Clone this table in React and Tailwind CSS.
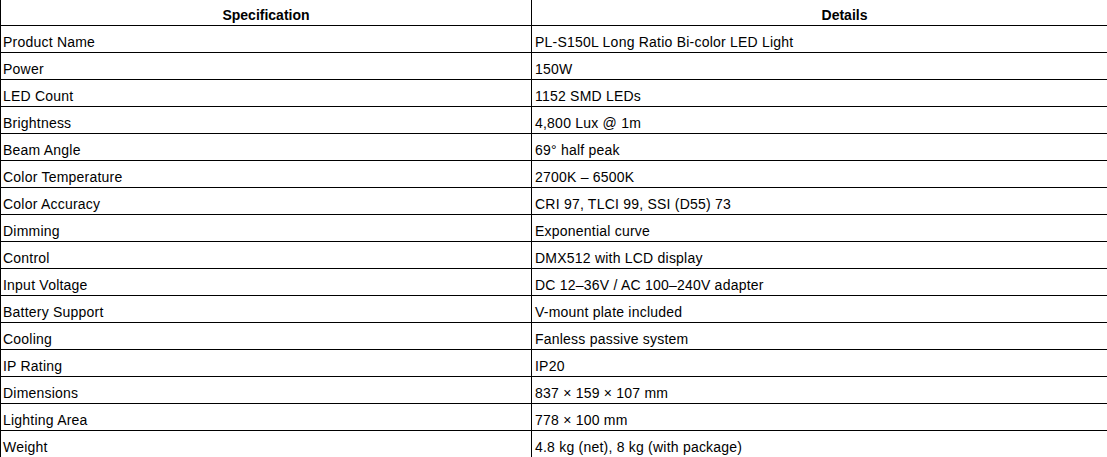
const specs = [
  ["Product Name", "PL-S150L Long Ratio Bi-color LED Light"],
  ["Power", "150W"],
  ["LED Count", "1152 SMD LEDs"],
  ["Brightness", "4,800 Lux @ 1m"],
  ["Beam Angle", "69° half peak"],
  ["Color Temperature", "2700K – 6500K"],
  ["Color Accuracy", "CRI 97, TLCI 99, SSI (D55) 73"],
  ["Dimming", "Exponential curve"],
  ["Control", "DMX512 with LCD display"],
  ["Input Voltage", "DC 12–36V / AC 100–240V adapter"],
  ["Battery Support", "V-mount plate included"],
  ["Cooling", "Fanless passive system"],
  ["IP Rating", "IP20"],
  ["Dimensions", "837 × 159 × 107 mm"],
  ["Lighting Area", "778 × 100 mm"],
  ["Weight", "4.8 kg (net), 8 kg (with package)"],
];

export default function App() {
  return (
    <div className="w-screen h-screen overflow-hidden bg-white">
      <table
        className="mt-[-2px] w-[1158px] border-collapse text-[14px] leading-[16px] text-black"
        style={{ fontFamily: '"Liberation Sans", Arial, sans-serif' }}
      >
        <thead>
          <tr>
            <th className="w-[531px] border border-black px-[3px] pt-[8px] pb-[2px] text-center font-bold">
              Specification
            </th>
            <th className="border border-black px-[3px] pt-[8px] pb-[2px] text-center font-bold">
              Details
            </th>
          </tr>
        </thead>
        <tbody className="tracking-[0.22px]">
          {specs.map(([name, value]) => (
            <tr key={name}>
              <td className="border border-black pl-[2px] pr-[3px] pt-[8px] pb-[2px] text-left">
                {name}
              </td>
              <td className="border border-black px-[3px] pt-[8px] pb-[2px] text-left">
                {value}
              </td>
            </tr>
          ))}
        </tbody>
      </table>
    </div>
  );
}
